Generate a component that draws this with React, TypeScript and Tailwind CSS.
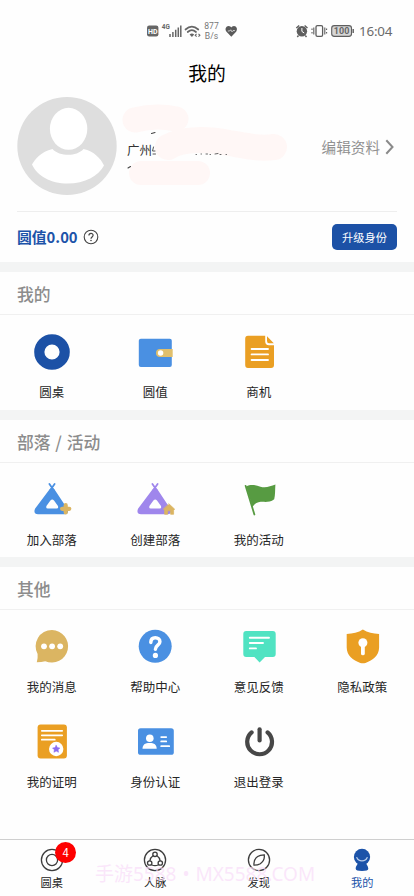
import type { ReactNode } from "react";

interface MenuItem {
  label: string;
  icon: ReactNode;
}

interface SectionProps {
  title: string;
  items: MenuItem[];
  className?: string;
}

const Icon = ({ children }: { children: ReactNode }) => (
  <svg viewBox="0 0 40 40" className="w-10 h-10 overflow-visible" fill="none" strokeLinecap="round" strokeLinejoin="round">
    {children}
  </svg>
);

const Tent = ({ color }: { color: string }) => (
  <>
    <path d="M17.4 4L21.6 10M22.6 4L18.4 10" stroke={color} strokeWidth="1.8" />
    <path
      d="M17.6 9.2Q20 6.8 22.4 9.2L35.8 29.4Q37 34.3 32.5 34.3H6Q1 34 3 28.7ZM18.4 20.6L14.6 25.8Q13.4 28.6 15.8 28.6H24.6Q27 28.6 25.8 25.8L22 20.6Q20.2 18.4 18.4 20.6Z"
      fill={color}
      fillRule="evenodd"
    />
  </>
);

const mine: MenuItem[] = [
  {
    label: "圆桌",
    icon: <Icon><circle cx="20" cy="20" r="12.7" stroke="#1c51a6" strokeWidth="10.2" /></Icon>,
  },
  {
    label: "圆值",
    icon: (
      <Icon>
        <rect x="3.8" y="6.7" width="33" height="28.3" rx="2" fill="#4a90e2" />
        <path d="M25 17H37.7V25H25A4 4 0 0 1 25 17Z" fill="#e0bf6c" />
        <circle cx="25.6" cy="21" r="2.7" fill="#fff" />
      </Icon>
    ),
  },
  {
    label: "商机",
    icon: (
      <Icon>
        <path d="M9 3.8H26.2V9.5Q26.2 13.2 30 13.2H35V33Q35 36 32 36H9Q6.2 36 6.2 33V6.8Q6.2 3.8 9 3.8Z" fill="#ea9f23" />
        <path d="M28 4.2L34.8 11.2H30Q28 11.2 28 9Z" fill="#ea9f23" />
        <path d="M12.6 17H29M12.6 22.4H29M12.6 28H29" stroke="#fff" strokeWidth="1.9" />
      </Icon>
    ),
  },
];

const tribe: MenuItem[] = [
  {
    label: "加入部落",
    icon: (
      <Icon>
        <Tent color="#4a90e2" />
        <path d="M33.7 25.2V32.4M30.1 28.8H37.3" stroke="#dbb562" strokeWidth="4.2" />
      </Icon>
    ),
  },
  {
    label: "创建部落",
    icon: (
      <Icon>
        <Tent color="#9f86ec" />
        <path d="M34.1 24L39.7 29.2L38.6 30.2V34.3H35.6V30.8H32.6V34.3H29.6V30.2L28.5 29.2Z" fill="#dbb562" stroke="#dbb562" strokeWidth=".7" />
      </Icon>
    ),
  },
  {
    label: "我的活动",
    icon: (
      <Icon>
        <path d="M6.6 5.8L15.4 34.5" stroke="#579b42" strokeWidth="1.8" />
        <path d="M7.2 6.4C12 3.8 17 5.2 21.5 6.7C26.5 8.2 31.5 6.4 36.4 4.6C36 10 36.3 15.5 35.2 19.2C30 23.5 24.5 21 19.5 22.3C16.5 23 15 25 13.4 27Z" fill="#579b42" />
      </Icon>
    ),
  },
];

const others: MenuItem[] = [
  {
    label: "我的消息",
    icon: (
      <Icon>
        <path d="M20 3A16.3 16.3 0 1 1 13.2 34.2Q9.5 35.2 4.8 35.2Q6 31.5 5.6 27.1A16.3 16.3 0 0 1 20 3Z" fill="#dbb562" />
        <circle cx="12" cy="19.3" r="2.9" fill="#fff" />
        <circle cx="20.1" cy="19.3" r="2.9" fill="#fff" />
        <circle cx="28.2" cy="19.3" r="2.9" fill="#fff" />
      </Icon>
    ),
  },
  {
    label: "帮助中心",
    icon: (
      <Icon>
        <circle cx="20.2" cy="19.3" r="16.5" fill="#4a90e2" />
        <path d="M15.8 15.4C15.9 12.3 17.8 10.8 20.3 10.8C23 10.8 24.9 12.5 24.9 14.8C24.9 18.2 20.4 18.3 20.4 22.3" stroke="#fff" strokeWidth="3.5" />
        <circle cx="20.4" cy="28.4" r="2.6" fill="#fff" />
      </Icon>
    ),
  },
  {
    label: "意见反馈",
    icon: (
      <Icon>
        <path d="M7.2 4H33.8Q36.7 4 36.7 7V27Q36.7 30 33.8 30H26L20.6 35.6L15.4 30H7.2Q4.3 30 4.3 27V7Q4.3 4 7.2 4Z" fill="#50e3c2" />
        <path d="M10.8 10.7H30M10.8 16H24M10.8 21.4H17" stroke="#fff" strokeWidth="1.9" />
      </Icon>
    ),
  },
  {
    label: "隐私政策",
    icon: (
      <Icon>
        <path d="M20.9 2.4C25.5 5.3 31 6.7 37.1 6.9V20.5C37.1 28.5 30.8 33.2 23.5 35.9Q20.9 36.8 18.3 35.9C11 33.2 4.7 28.5 4.7 20.5V6.9C10.8 6.7 16.3 5.3 20.9 2.4Z" fill="#ea9f23" />
        <circle cx="20.9" cy="15.7" r="4.5" fill="#fff" />
        <path d="M20.9 17V26.4" stroke="#fff" strokeWidth="3.8" />
      </Icon>
    ),
  },
  {
    label: "我的证明",
    icon: (
      <Icon>
        <rect x="5.6" y="2.4" width="29.3" height="34.2" rx="3" fill="#ea9f23" />
        <path d="M9.8 8.8H30.2M9.8 13.3H30.2M9.8 17.7H22.8" stroke="#fff" strokeWidth="1.7" />
        <circle cx="24.2" cy="27" r="7.2" fill="#fff" />
        <path d="M24.2 23.3L25.4 25.6L27.9 26L26.1 27.8L26.5 30.3L24.2 29.1L21.9 30.3L22.3 27.8L20.5 26L23 25.6Z" fill="#8a6df0" stroke="#8a6df0" strokeWidth=".5" />
      </Icon>
    ),
  },
  {
    label: "身份认证",
    icon: (
      <Icon>
        <rect x="3" y="6.2" width="35.8" height="26.6" rx="2.6" fill="#4a90e2" />
        <circle cx="14.8" cy="16.2" r="3.8" fill="#fff" />
        <path d="M7.5 26.8C7.5 22.6 10 20.9 14.6 20.9C19.2 20.9 21.7 22.6 21.7 26.8Z" fill="#fff" />
        <path d="M26.2 15.1H31.2M26.2 19.4H31.2M26.2 24.2H34.2" stroke="#fff" strokeWidth="1.8" />
      </Icon>
    ),
  },
  {
    label: "退出登录",
    icon: (
      <Icon>
        <path d="M12.6 10.4A12.4 12.4 0 1 0 28.6 10.4" stroke="#474747" strokeWidth="4.2" />
        <path d="M20.6 7.3V18.5" stroke="#474747" strokeWidth="4.2" />
      </Icon>
    ),
  },
];

const StatusBar = () => (
  <div className="h-[50px] pt-[11px] pl-[146px] pr-[22px] flex items-center text-[#6b6b6b]">
    <svg viewBox="0 0 92 20" className="w-[92px] h-5 shrink-0" fill="none" stroke="#666">
      <rect x="1" y="4.5" width="11.4" height="11" rx="2.2" fill="#666" stroke="none" />
      <text x="6.7" y="12.7" fontSize="7" fontWeight="700" fill="#fff" stroke="none" textAnchor="middle" fontFamily="Roboto, sans-serif">HD</text>
      <text x="15.8" y="8.2" fontSize="6.4" fontWeight="700" fill="#666" stroke="none" fontFamily="Roboto, sans-serif">4G</text>
      <path d="M24 13V16M26.9 11V16M29.7 8.8V16M32.3 6.5V16M34.8 4.5V16" strokeWidth="1.5" />
      <path d="M39.5 8.5Q45.8 2.8 52.3 8.5M41.7 11Q45.9 7.3 50 11" strokeWidth="1.7" strokeLinecap="round" />
      <path d="M43.6 13.4Q45.9 11.4 48.2 13.4L45.9 15.9Z" fill="#666" stroke="none" />
      <path d="M50.6 12.8L49.2 14.2L50.6 15.6M52.5 12.8L53.9 14.2L52.5 15.6" strokeWidth="1.1" />
      <text x="65.5" y="8.3" fontSize="8.6" fill="#777" stroke="none" textAnchor="middle" fontFamily="Roboto, sans-serif">877</text>
      <text x="65.5" y="18.2" fontSize="8.6" fill="#777" stroke="none" textAnchor="middle" fontFamily="Roboto, sans-serif">B/s</text>
      <path d="M85.3 15.8L80.5 10.8C78.5 8.3 80 5 82.6 5C84 5 84.9 5.8 85.3 6.6C85.7 5.8 86.6 5 88 5C90.6 5 92 8.3 90.1 10.8Z" fill="#5a5a5a" stroke="none" />
      <path d="M81.800 10H83.6L84.7 8.800L86 10.800L87 9.6H88.900" stroke="#fff" strokeWidth=".7" />
    </svg>
    <svg viewBox="0 0 60 20" className="w-[60px] h-5 ml-auto mr-[4px] shrink-0" fill="none" stroke="#5e5e5e">
      <circle cx="6.9" cy="10.3" r="5.2" fill="#5e5e5e" stroke="none" />
      <path d="M1.3 7L4.2 4.5M12.5 7L9.6 4.5M3.5 14.5L2.3 16M10.3 14.5L11.5 16" strokeWidth="1.4" />
      <path d="M6.9 7V10.4L9.2 12" stroke="#fff" strokeWidth="1" />
      <rect x="21" y="4.6" width="6.6" height="10.8" rx="1.4" strokeWidth="1.3" />
      <path d="M18.8 6.5V13.5M29.8 6.5V13.5" strokeWidth="1.1" />
      <path d="M17 7.5V9M17 11V12.5M31.6 7.5V9M31.6 11V12.5" strokeWidth="1.1" />
      <rect x="36.7" y="4.6" width="19.8" height="10.8" rx="2.6" fill="#d6d6d6" strokeWidth="1.1" />
      <path d="M58.2 8V12" strokeWidth="1.4" />
      <text x="46.6" y="13.3" fontSize="9" fontWeight="700" fill="#666" stroke="none" textAnchor="middle" fontFamily="Roboto, sans-serif">100</text>
    </svg>
    <span className="w-[33px] text-[13.4px] leading-5 tracking-[-0.2px] whitespace-nowrap font-['Noto_Sans',sans-serif]">16:04</span>
  </div>
);

const Profile = () => (
  <div className="mx-[17px] h-[117px] pt-[2px] flex items-start border-b border-[#eeeeee]">
    <svg viewBox="0 0 100 98" className="w-[100px] h-[98px] shrink-0">
      <ellipse cx="50" cy="49" rx="49.7" ry="49" fill="#dedede" />
      <path d="M35.5 52C24 54.5 18 62.5 15 67.5C20 79 34 86.5 50.5 86.5C68 86.5 81.5 79 87 68.5C83.5 61 77 54.5 66.5 52C63 56 57 57.8 51.5 57.8C45 57.8 39 56 35.5 52Z" fill="#fff" />
      <ellipse cx="51.6" cy="31.8" rx="18.7" ry="21" fill="#fff" />
    </svg>
    <div className="relative flex-1 h-[98px] pt-[43px] pl-[10px]">
      <p className="text-[12.5px] leading-5 text-[#333]">广州</p>
      <svg viewBox="0 0 174 98" className="absolute left-0 top-0 w-[174px] h-[98px]" strokeLinecap="round" fill="none">
        <path d="M18 23C30 20 45 19 59 22" stroke="#fff7f6" strokeWidth="25" />
        <path d="M51 50C66 41 92 42 112 46C130 49 142 52 157 50" stroke="#fff7f6" strokeWidth="26" />
        <path d="M24 76C42 76 62 76 81 76" stroke="#fff7f6" strokeWidth="24" />
        <path d="M34.5 36.5L38 35.5M11 71L13.5 69.5" stroke="#444" strokeWidth="1.1" />
        <path d="M36.5 50L35.5 54H38M36 57H38.5" stroke="#555" strokeWidth="1" />
        <path d="M79 57.5H79.5M84 57H84.5M89 57H90.5M93 57.5H93.5M98 57L101 56.5M103 57.5H104M109 57.5H109.5" stroke="#666" strokeWidth="1" />
      </svg>
    </div>
    <button type="button" className="mt-[38px] mr-[3px] flex items-center text-[14.6px] leading-6 text-[#919191]">
      编辑资料
      <svg viewBox="0 0 9 16" className="w-[9px] h-4 ml-[5px]" fill="none">
        <path d="M1.3 1.3L7.5 8L1.3 14.7" stroke="#8a8a8a" strokeWidth="2" />
      </svg>
    </button>
  </div>
);

const Section = ({ title, items, className = "" }: SectionProps) => (
  <section className={`border-t-[10px] border-[#f3f4f4] ${className}`}>
    <h2 className="h-[43px] pl-[17px] pt-px border-b border-[#f0f0f0] text-[16.8px] leading-[42px] font-medium [word-spacing:1px] text-[#8c8c8c]">
      {title}
    </h2>
    <div className="grid grid-cols-4 gap-y-[25px] pt-[17px]">
      {items.map((item) => (
        <button key={item.label} type="button" className="flex flex-col items-center gap-[10px]">
          {item.icon}
          <span className="text-[12.5px] leading-5 text-[#262626]">{item.label}</span>
        </button>
      ))}
    </div>
  </section>
);

const tabs = [
  {
    label: "圆桌",
    badge: 4,
    icon: (
      <>
        <circle cx="12" cy="12" r="10.6" />
        <circle cx="12" cy="12" r="5.6" />
      </>
    ),
  },
  {
    label: "人脉",
    icon: (
      <>
        <circle cx="12" cy="12" r="10.6" />
        <circle cx="12" cy="6.3" r="2.2" />
        <circle cx="6.7" cy="15" r="2.2" />
        <circle cx="17.3" cy="15" r="2.2" />
        <path d="M10 7.7Q7.3 9.5 7 12.5M14 7.7Q16.7 9.5 17 12.5M8.5 16.7Q12 18.6 15.5 16.7" />
      </>
    ),
  },
  {
    label: "发现",
    icon: (
      <>
        <circle cx="12" cy="12" r="10.6" />
        <path d="M17.2 6.8C17.8 10.300 16 13.800 13.3 15.7C11.2 17 8.800 17.2 7 17.2C6.600 13.800 8.200 10.300 10.7 8.500C12.8 7.100 15.200 6.900 17.2 6.800Z" />
      </>
    ),
  },
  {
    label: "我的",
    active: true,
    icon: (
      <>
        <path d="M8 14H16C16 17 18.3 17.5 18.3 20.8Q18.3 23 12 23Q5.7 23 5.7 20.8C5.7 17.5 8 17 8 14Z" fill="#1c53a9" stroke="none" />
        <circle cx="12" cy="8.9" r="8.1" fill="#1c53a9" stroke="none" />
        <path d="M6.8 9.5C8.5 14 15.5 14 17.2 9.5" stroke="#b9cdea" strokeWidth="1.2" />
      </>
    ),
  },
];

const TabBar = () => (
  <nav className="h-[57px] grid grid-cols-4 border-t border-[#cfcfcf]">
    {tabs.map((tab) => (
      <button key={tab.label} type="button" className="flex flex-col items-center pt-2">
        <span className="relative">
          <svg viewBox="0 0 24 24" className="w-6 h-6" fill="none" stroke="#3d3d3d" strokeWidth="1.3" strokeLinecap="round">
            {tab.icon}
          </svg>
          {tab.badge && (
            <span className="absolute -top-[6px] left-[15.5px] w-[21px] h-[21px] rounded-full bg-[#fe0000] text-white text-[11.5px] leading-[21px] text-center">
              {tab.badge}
            </span>
          )}
        </span>
        <span className={`mt-[2px] text-[11.2px] leading-4 ${tab.active ? "text-[#1c53a9]" : "text-[#222]"}`}>
          {tab.label}
        </span>
      </button>
    ))}
  </nav>
);

export default function App() {
  return (
    <div className="relative w-full h-[896px] overflow-hidden flex flex-col bg-[#fefefe] font-['Noto_Sans_CJK_SC',sans-serif]">
      <StatusBar />
      <h1 className="h-[45px] text-center text-[18.8px] leading-[45px] text-black">我的</h1>
      <Profile />

      {/* BALANCE */}
      <div className="h-[50px] px-[17px] flex items-center">
        <span className="text-[14.8px] font-bold text-[#1c53a9]">圆值0.00</span>
        <svg viewBox="0 0 16 16" className="w-4 h-4 ml-[5px]" fill="none" stroke="#444" strokeWidth="1.1">
          <circle cx="8" cy="8" r="6.8" />
          <path d="M5.9 6.6C6 3.6 10.1 3.8 10.1 6.3C10.1 8 8 7.9 8 9.7" strokeWidth="1.2" />
          <circle cx="8" cy="11.5" r=".8" fill="#444" stroke="none" />
        </svg>
        <button type="button" className="ml-auto w-[65px] h-[26px] rounded-[5px] bg-[#1c51a6] text-white text-[11.2px] leading-[25px]">
          升级身份
        </button>
      </div>

      <Section title="我的" items={mine} className="h-[148px]" />
      <Section title="部落 / 活动" items={tribe} className="h-[147px]" />
      <Section title="其他" items={others} className="flex-1" />
      <TabBar />

      <div className="absolute left-[95px] top-[862px] text-[19px] leading-6 whitespace-nowrap [word-spacing:1px] text-[#f9dcf9]/70 pointer-events-none font-['Noto_Sans','Noto_Sans_CJK_SC',sans-serif]">
        手游5588 • MX5588.COM
      </div>
    </div>
  );
}
